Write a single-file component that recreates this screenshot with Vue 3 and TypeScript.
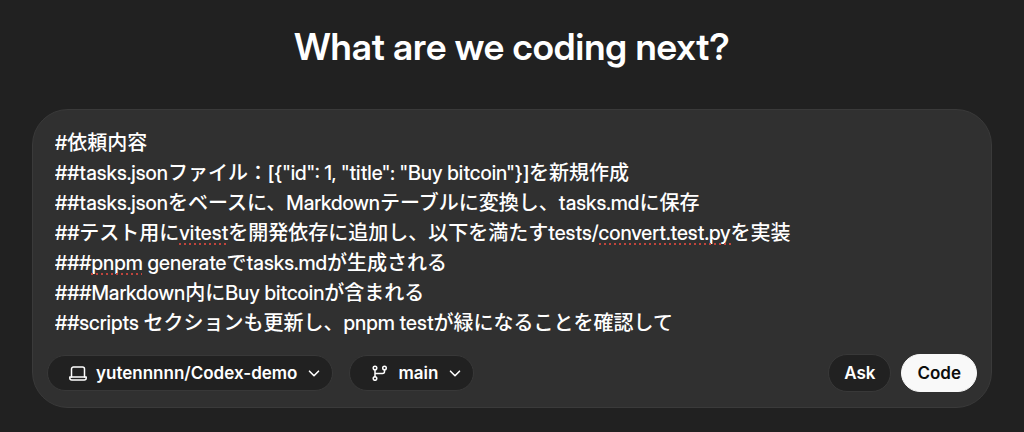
<script setup lang="ts">
import { onBeforeUnmount, onMounted, ref, watch } from 'vue'

interface Mark {
  left: number
  top: number
  width: number
}

const LINE_HEIGHT = 30

const prompt = ref<string>(
  [
    '#依頼内容',
    '##tasks.jsonファイル：[{"id": 1, "title": "Buy bitcoin"}]を新規作成',
    '##tasks.jsonをベースに、Markdownテーブルに変換し、tasks.mdに保存',
    '##テスト用にvitestを開発依存に追加し、以下を満たすtests/convert.test.pyを実装',
    '###pnpm generateでtasks.mdが生成される',
    '###Markdown内にBuy bitcoinが含まれる',
    '##scripts セクションも更新し、pnpm testが緑になることを確認して',
  ].join('\n'),
)

const input = ref<HTMLTextAreaElement | null>(null)
const marks = ref<Mark[]>([])

function updateMarks(): void {
  const ctx = document.createElement('canvas').getContext('2d')
  if (!input.value || !ctx) return
  const style = getComputedStyle(input.value)
  ctx.font = `${style.fontWeight} ${style.fontSize} ${style.fontFamily}`
  const found: Mark[] = []
  prompt.value.split('\n').forEach((line, row) => {
    for (const match of line.matchAll(/vitest|convert\.test\.py|(?<=###)pnpm/g)) {
      found.push({
        left: Math.round(ctx.measureText(line.slice(0, match.index)).width),
        top: (row + 1) * LINE_HEIGHT - 5,
        width: Math.round(ctx.measureText(match[0]).width),
      })
    }
  })
  marks.value = found
}

onMounted(() => {
  updateMarks()
  window.addEventListener('resize', updateMarks)
})
onBeforeUnmount(() => window.removeEventListener('resize', updateMarks))
watch(prompt, updateMarks)
</script>

<template>
  <main class="page">
    <h1 class="title">What are we coding next?</h1>
    <form class="composer" @submit.prevent>
      <div class="editor">
        <textarea ref="input" v-model="prompt" class="input" rows="7" spellcheck="false" aria-label="Task description"></textarea>
        <span
          v-for="(m, i) in marks"
          :key="i"
          class="mark"
          :style="{ left: `${m.left}px`, top: `${m.top}px`, width: `${m.width}px` }"
        ></span>
      </div>
      <div class="toolbar">
        <button type="button" class="pill">
          <svg class="icon" viewBox="0 0 20 20" aria-hidden="true">
            <path d="M3.500 14V6a2 2 0 0 1 2-2h9a2 2 0 0 1 2 2v8" />
            <path d="M1.800 14h16.400v1a2 2 0 0 1-2 2H3.800a2 2 0 0 1-2-2Z" />
          </svg>
          <span>yutennnnn/Codex-demo</span>
          <svg class="chevron" viewBox="0 0 12 12" aria-hidden="true"><path d="M1.500 4.200 6 8.700l4.500-4.500" /></svg>
        </button>
        <button type="button" class="pill">
          <svg class="icon branch" viewBox="0 0 16 16" aria-hidden="true">
            <circle cx="3" cy="3" r="1.800" />
            <circle cx="12.500" cy="3" r="1.800" />
            <circle cx="3" cy="13.500" r="1.800" />
            <path d="M3 4.800v6.900M12.500 4.800v1.700a2 2 0 0 1-2 2H3" />
          </svg>
          <span>main</span>
          <svg class="chevron" viewBox="0 0 12 12" aria-hidden="true"><path d="M1.500 4.200 6 8.700l4.500-4.500" /></svg>
        </button>
        <div class="actions">
          <button type="button" class="action">Ask</button>
          <button type="submit" class="action primary">Code</button>
        </div>
      </div>
    </form>
  </main>
</template>

<style>
html,
body {
  background: #212121;
}
</style>

<style scoped>
.page {
  min-height: 100vh;
  box-sizing: border-box;
  padding: 23px 32px;
  background: #212121;
  color: #fff;
  font-family: Inter, "Noto Sans CJK JP", sans-serif;
}

.title {
  margin: 0 0 38px;
  font-family: "Inter Display", Inter, sans-serif;
  font-size: 37px;
  line-height: 48px;
  font-weight: 600;
  text-align: center;
}

.composer {
  box-sizing: border-box;
  padding: 18px 14px 15px 15px;
  border: 1px solid #3a3a3a;
  border-radius: 36px;
  background: #303030;
}

.editor {
  position: relative;
  margin: 0 7px;
}

.input {
  display: block;
  box-sizing: border-box;
  width: 100%;
  margin: 0;
  padding: 0;
  border: 0;
  resize: none;
  outline: none;
  overflow: hidden;
  background: transparent;
  color: #fff;
  font-family: "Inter Display", Inter, "Noto Sans CJK JP", sans-serif;
  font-size: 20px;
  font-weight: 500;
  line-height: 30px;
}

.mark {
  position: absolute;
  height: 2px;
  background: radial-gradient(circle at 1px 1px, #c0443c 1px, transparent 1px) 0 0 / 5px 2px repeat-x;
  pointer-events: none;
}

.toolbar {
  display: flex;
  align-items: center;
  gap: 16px;
  margin: 16px 0 0 -1px;
}

.pill,
.action {
  display: flex;
  align-items: center;
  box-sizing: border-box;
  margin: 0;
  border: 1px solid #383838;
  border-radius: 20px;
  background: #212121;
  color: #fff;
  font-family: inherit;
  font-weight: 600;
  font-size: 17px;
  line-height: 24px;
  white-space: nowrap;
}

.pill {
  height: 36px;
  padding: 0 12px 0 20px;
}

.icon,
.chevron {
  flex: none;
  fill: none;
  stroke: currentColor;
  stroke-linecap: round;
  stroke-linejoin: round;
}

.icon {
  width: 20px;
  height: 20px;
  margin-right: 8px;
  stroke-width: 1.5;
}

.branch {
  width: 16px;
  height: 16px;
  margin: 0 10px 0 2px;
}

.chevron {
  width: 12px;
  height: 12px;
  margin-left: 11px;
  stroke-width: 1.6;
}

.actions {
  display: flex;
  gap: 10px;
  margin-left: auto;
}

.action {
  height: 38px;
  padding: 0 15px;
}

.primary {
  border-color: #f9f9f9;
  background: #f9f9f9;
  color: #0d0d0d;
}
</style>
